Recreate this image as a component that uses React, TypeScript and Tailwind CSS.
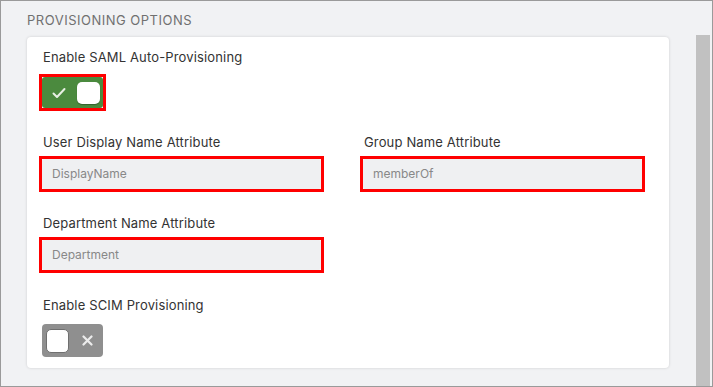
import React from "react";

// red annotation frame drawn over an element
function RedBox() {
  return <span className="pointer-events-none absolute -inset-[3px] border-[3px] border-[#ff0000]" />;
}

function Field({ label, value }: { label: string; value: string }) {
  return (
    <div className="flex flex-col">
      <span className="text-[13px] leading-4 tracking-[0.15px] text-[#333333] pl-px">{label}</span>
      <div className="relative mt-[9px] h-[30px] w-[279px] rounded-[2px] bg-[#eff0f2] pl-[10px] flex items-center text-[12px] text-[#888888]">
        {value}
        <RedBox />
      </div>
    </div>
  );
}

export default function App() {
  return (
    <div
      className="w-[713px] h-[387px] border border-[#9a9a9a] bg-[#f1f2f4] flex"
      style={{ fontFamily: "Inter, 'Noto Sans', sans-serif" }}
    >
      <div className="flex-1 pl-[26px] pr-[26px]">
        {/* header */}
        <div className="pt-[11px] text-[13px] leading-4 tracking-[0.5px] text-[#707070] uppercase">
          Provisioning Options
        </div>

        {/* card */}
        <div className="mt-[9px] w-[642px] rounded-[4px] bg-white shadow-[0_0_3px_rgba(0,0,0,0.15)] pl-[15px] pt-[12px] pb-[11px]">
          <span className="block text-[13px] leading-4 tracking-[0.15px] text-[#333333] pl-px">Enable SAML Auto-Provisioning</span>
          <div className="relative mt-[12px] w-[61px] h-[31px] rounded-[3px] bg-[#4b8a3e] flex items-center justify-between pl-[10px] pr-[3px]">
            <svg width="14" height="12" viewBox="0 0 14 12" fill="none">
              <path d="M1.5 6.5 L5 10 L12.5 2" stroke="#e8f0e4" strokeWidth="2" strokeLinecap="round" strokeLinejoin="round" />
            </svg>
            <div className="w-[23px] h-[22px] rounded-[5px] bg-white shadow-[0_1px_1px_rgba(0,0,0,0.3)]" />
            <RedBox />
          </div>

          <div className="mt-[26px] grid grid-cols-[279px_279px] gap-x-[42px] gap-y-[26px]">
            <Field label="User Display Name Attribute" value="DisplayName" />
            <Field label="Group Name Attribute" value="memberOf" />
            <Field label="Department Name Attribute" value="Department" />
          </div>

          <span className="mt-[27px] block text-[13px] leading-4 tracking-[0.15px] text-[#333333] pl-px">Enable SCIM Provisioning</span>
          <div className="mt-[11px] w-[61px] h-[33px] rounded-[4px] bg-[#8f8f8f] flex items-center justify-between pl-[4px] pr-[10px]">
            <div className="w-[23px] h-[24px] rounded-[5px] bg-white border border-[#6f6f6f]" />
            <svg width="11" height="11" viewBox="0 0 11 11" fill="none">
              <path d="M1.5 1.5 L9.5 9.5 M9.5 1.5 L1.5 9.5" stroke="#ececec" strokeWidth="2.2" strokeLinecap="round" />
            </svg>
          </div>
        </div>
      </div>

      {/* scrollbar */}
      <div className="w-[16px] pt-[34px] pr-[2px]">
        <div className="h-full bg-[#c1c1c1]" />
      </div>
    </div>
  );
}
